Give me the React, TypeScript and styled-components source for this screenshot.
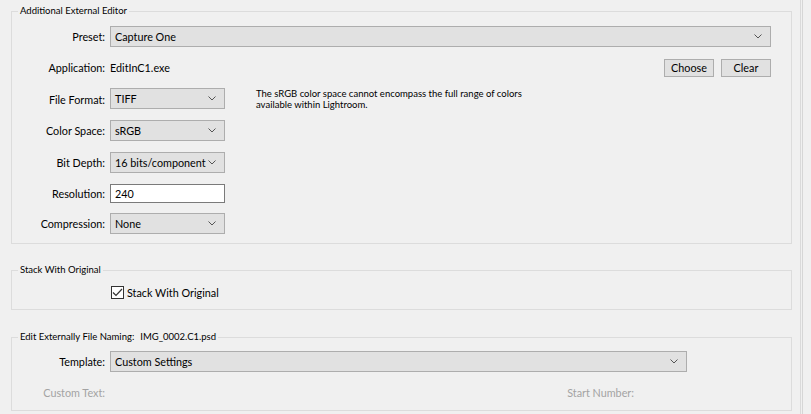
import React from 'react';
import styled, { createGlobalStyle } from 'styled-components';

const GlobalStyle = createGlobalStyle`
  body {
    margin: 0;
    background: #f0f0f0;
    font-family: Lato, "Liberation Sans", sans-serif;
    color: #000;
  }
`;

const uiSize = '10.8px';

const Page = styled.div`
  display: flex;
  height: 414px;
  overflow: hidden;
  background: #f0f0f0;
`;

const Main = styled.div`
  width: 800px;
  box-sizing: border-box;
  padding: 4px 8px 0 11px;
  display: flex;
  flex-direction: column;
`;

const WindowEdge = styled.div`
  width: 1px;
  border-left: 1px solid #dadada;
  border-right: 1px solid #d6d6d6;
`;

const Group = styled.fieldset<{ $mt?: number; $pt: number; $pb: number }>`
  margin: ${p => p.$mt ?? 0}px 0 0;
  padding: ${p => p.$pt}px 20px ${p => p.$pb}px 7px;
  border: 1px solid #dcdcdc;
  min-width: 0;
  display: flex;
  flex-direction: column;
  gap: 11px;
`;

const Legend = styled.legend`
  margin-left: -1px;
  padding: 0 2px;
  font-size: 9.5px;
  line-height: 14px;
  display: flex;
  gap: 6px;
`;

const Row = styled.div<{ $h?: number; $mt?: number }>`
  display: grid;
  grid-template-columns: 86px 1fr;
  column-gap: 5px;
  align-items: center;
  height: ${p => p.$h ?? 21}px;
  margin-top: ${p => p.$mt ?? 0}px;
`;

const Label = styled.span<{ $disabled?: boolean }>`
  text-align: right;
  font-size: ${uiSize};
  white-space: nowrap;
  color: ${p => (p.$disabled ? '#a3a3a3' : '#000')};
`;

const Cell = styled.div<{ $top?: boolean }>`
  display: flex;
  align-items: ${p => (p.$top ? 'flex-start' : 'center')};
  height: 100%;
  min-width: 0;
`;

const SelectBox = styled.div<{ $w: string }>`
  width: ${p => p.$w};
  height: 21px;
  box-sizing: border-box;
  border: 1px solid #adadad;
  background: #e1e1e1;
  display: flex;
  align-items: center;
  justify-content: space-between;
  padding: 0 8px 0 4px;
  font-size: ${uiSize};
  white-space: nowrap;
  flex-shrink: 0;

  svg {
    flex-shrink: 0;
  }
`;

const Value = styled.span`
  font-size: ${uiSize};
`;

const Buttons = styled.div`
  margin-left: auto;
  display: flex;
  gap: 7px;
`;

const Button = styled.button`
  width: 50px;
  height: 18px;
  padding: 0;
  border: 1px solid #adadad;
  background: #e1e1e1;
  font-family: inherit;
  font-size: ${uiSize};
  color: #000;
`;

const TextInput = styled.div`
  width: 115px;
  height: 19px;
  box-sizing: border-box;
  border: 1px solid #7a7a7a;
  background: #fff;
  padding: 0 4px;
  display: flex;
  align-items: center;
  font-size: ${uiSize};
  align-self: flex-start;
`;

const Note = styled.div`
  margin-left: 31px;
  font-size: 9.5px;
  line-height: 11px;
  white-space: nowrap;
`;

const CheckLine = styled.label`
  display: flex;
  align-items: center;
  gap: 3px;
  margin-left: 1px;
  font-size: ${uiSize};
`;

const CheckBox = styled.span`
  width: 13px;
  height: 13px;
  box-sizing: border-box;
  border: 1px solid #333;
  background: #fff;
  display: flex;
  align-items: center;
  justify-content: center;
`;

const Fill = styled.div`
  width: 577px;
  display: flex;
  justify-content: flex-end;
  padding-right: 53px;
  box-sizing: border-box;
`;

const Chevron = () => (
  <svg width="8" height="5" viewBox="0 0 8 5">
    <polyline points="0.5,0.5 4,4 7.5,0.5" fill="none" stroke="#555" strokeWidth="1" />
  </svg>
);

const Select: React.FC<{ value: string; width: string }> = ({ value, width }) => (
  <SelectBox $w={width}>
    <span>{value}</span>
    <Chevron />
  </SelectBox>
);

export default function App() {
  return (
    <Page>
      <GlobalStyle />
      <Main>
        <Group $pt={8} $pb={9}>
          <Legend>Additional External Editor</Legend>
          <Row>
            <Label>Preset:</Label>
            <Cell>
              <Select value="Capture One" width="100%" />
            </Cell>
          </Row>
          <Row $h={19}>
            <Label>Application:</Label>
            <Cell>
              <Value>EditInC1.exe</Value>
              <Buttons>
                <Button>Choose</Button>
                <Button>Clear</Button>
              </Buttons>
            </Cell>
          </Row>
          <Row>
            <Label>File Format:</Label>
            <Cell $top>
              <Select value="TIFF" width="115px" />
              <Note>
                The sRGB color space cannot encompass the full range of colors
                <br />
                available within Lightroom.
              </Note>
            </Cell>
          </Row>
          <Row>
            <Label>Color Space:</Label>
            <Cell>
              <Select value="sRGB" width="115px" />
            </Cell>
          </Row>
          <Row>
            <Label>Bit Depth:</Label>
            <Cell>
              <Select value="16 bits/component" width="115px" />
            </Cell>
          </Row>
          <Row $h={19}>
            <Label>Resolution:</Label>
            <Cell>
              <TextInput>240</TextInput>
            </Cell>
          </Row>
          <Row $mt={-1}>
            <Label>Compression:</Label>
            <Cell>
              <Select value="None" width="115px" />
            </Cell>
          </Row>
        </Group>

        <Group $mt={19} $pt={8} $pb={9}>
          <Legend>Stack With Original</Legend>
          <Row $h={15}>
            <span />
            <Cell>
              <CheckLine>
                <CheckBox>
                  <svg width="11" height="9" viewBox="0 0 11 9">
                    <polyline points="1,4.5 4,7.5 10,1" fill="none" stroke="#333" strokeWidth="1.2" />
                  </svg>
                </CheckBox>
                Stack With Original
              </CheckLine>
            </Cell>
          </Row>
        </Group>

        <Group $mt={20} $pt={7} $pb={10}>
          <Legend>
            <span>Edit Externally File Naming:</span>
            <span>IMG_0002.C1.psd</span>
          </Legend>
          <Row>
            <Label>Template:</Label>
            <Cell>
              <Select value="Custom Settings" width="577px" />
            </Cell>
          </Row>
          <Row $h={15} $mt={2}>
            <Label $disabled>Custom Text:</Label>
            <Cell>
              <Fill>
                <Label $disabled>Start Number:</Label>
              </Fill>
            </Cell>
          </Row>
        </Group>
      </Main>
      <WindowEdge />
    </Page>
  );
}
